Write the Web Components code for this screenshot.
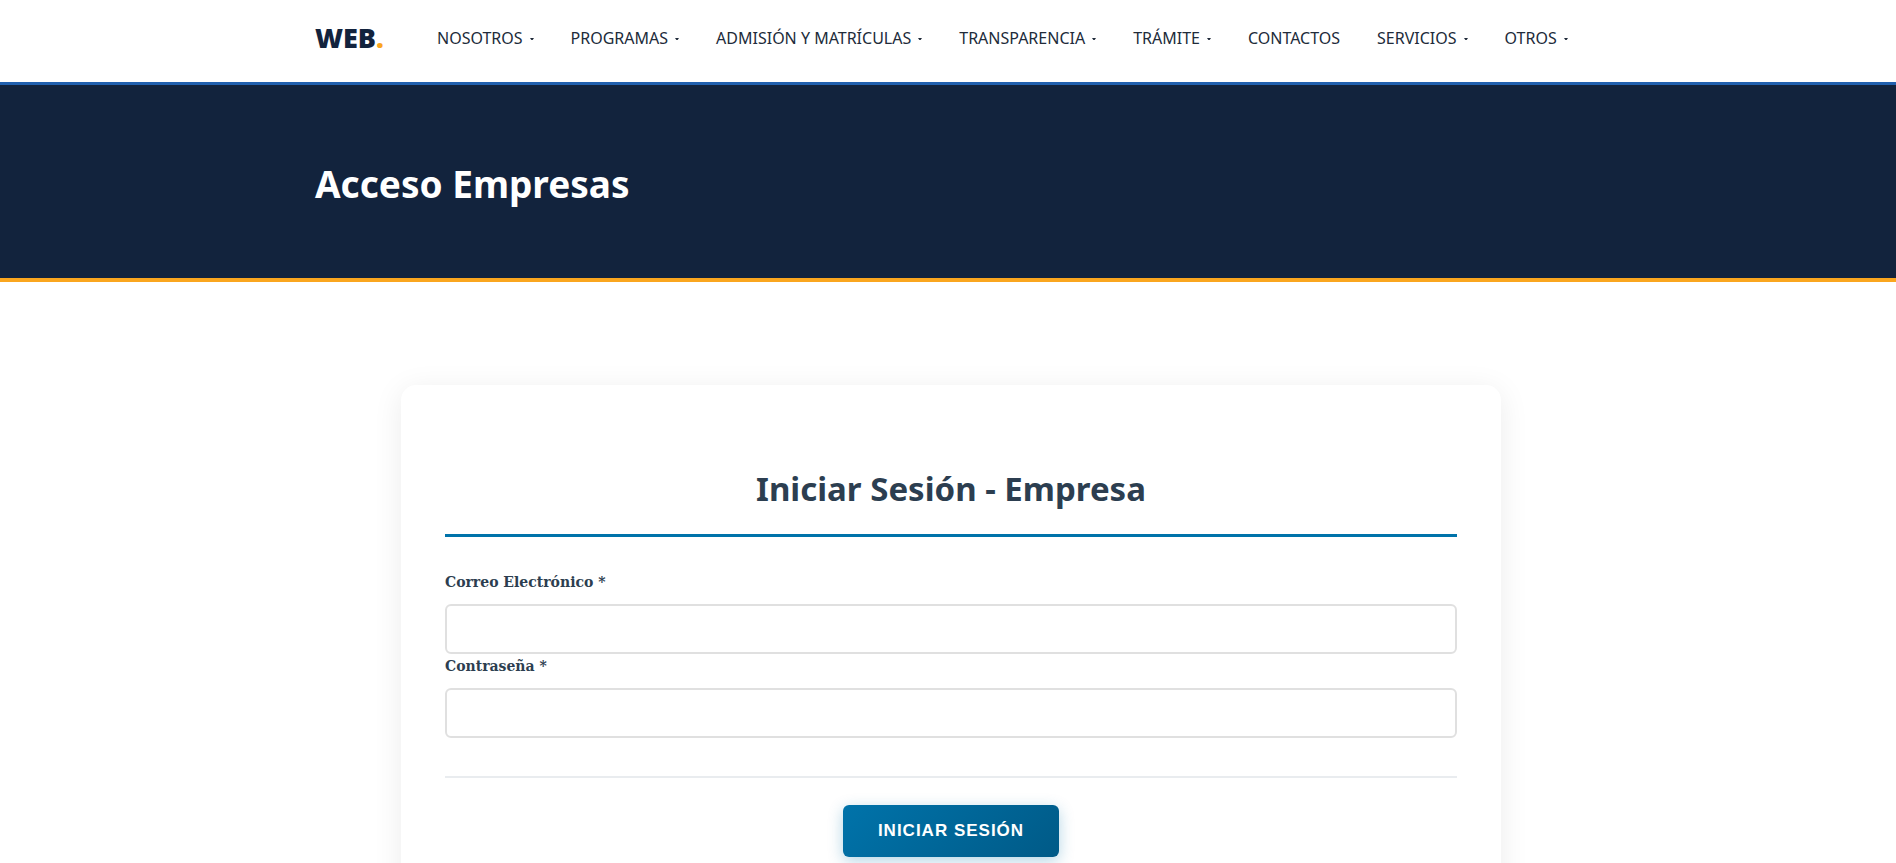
<!DOCTYPE html>
<html lang="es">
<head>
<meta charset="utf-8">
<meta name="viewport" content="width=device-width, initial-scale=1">
<title>Acceso Empresas</title>
<style>
  html, body { margin: 0; }
  body { font-family: "Noto Sans", "Open Sans", sans-serif; background: #fff; color: #2c3e50; overflow-x: hidden; }
</style>
</head>
<body>
<access-page></access-page>
<script>
const define = (name, html, setup) => customElements.define(name, class extends HTMLElement {
  constructor() {
    super();
    const t = document.createElement('template');
    t.innerHTML = html;
    this.attachShadow({ mode: 'open' }).append(t.content.cloneNode(true));
  }
  connectedCallback() { if (setup) setup(this, this.shadowRoot); }
});

define('nav-item', `
  <style>
    :host { display: block; }
    a { display: flex; align-items: center; gap: 7px; color: #212b3a; text-decoration: none; font-size: 16px; line-height: 20px; font-weight: 400; white-space: nowrap; }
    svg { display: none; margin-top: 2px; }
    :host([menu]) svg { display: block; }
  </style>
  <a href="#"><slot></slot><svg width="4" height="2" viewBox="0 0 4 2"><path d="M0 0h4L2.6 2H1.4z" fill="#212b3a"/></svg></a>`);

define('site-header', `
  <style>
    :host { display: block; border-bottom: 3px solid #2160ae; background: #fff; }
    .bar { display: flex; align-items: center; max-width: 1290px; height: 82px; margin: 0 auto; padding: 0 12px 6px; box-sizing: border-box; }
    .logo { color: #12233d; font: 800 27px/32px "Open Sans", sans-serif; text-decoration: none; width: 122px; flex: none; }
    .logo span { color: #faa61f; }
    nav { display: flex; gap: 37px; }
  </style>
  <div class="bar">
    <a class="logo" href="#">WEB<span>.</span></a>
    <nav aria-label="Principal">
      <nav-item menu>NOSOTROS</nav-item>
      <nav-item menu>PROGRAMAS</nav-item>
      <nav-item menu>ADMISIÓN Y MATRÍCULAS</nav-item>
      <nav-item menu>TRANSPARENCIA</nav-item>
      <nav-item menu>TRÁMITE</nav-item>
      <nav-item>CONTACTOS</nav-item>
      <nav-item menu>SERVICIOS</nav-item>
      <nav-item menu>OTROS</nav-item>
    </nav>
  </div>`);

define('page-hero', `
  <style>
    :host { display: block; background: #12233d; border-bottom: 4px solid #faa61f; }
    .in { max-width: 1290px; margin: 0 auto; padding: 75px 12px 70px; box-sizing: border-box; }
    h1 { margin: 0; color: #fff; font-size: 37px; line-height: 48px; font-weight: 700; }
  </style>
  <div class="in"><h1><slot></slot></h1></div>`);

define('form-field', `
  <style>
    :host { display: block; }
    label { display: block; font: 700 14px/24px "DejaVu Serif", serif; color: #2c3e50; margin-bottom: 10px; }
    input { display: block; width: 100%; height: 50px; box-sizing: border-box; border: 2px solid #e0e0e0; border-radius: 6px; padding: 12px 15px; font: 16px "Noto Sans", sans-serif; background: #fff; }
  </style>
  <label for="f"></label><input id="f">`, (host, root) => {
    root.querySelector('label').textContent = host.getAttribute('label');
    root.querySelector('input').type = host.getAttribute('type');
  });

define('login-card', `
  <style>
    :host { display: block; box-sizing: border-box; max-width: 1100px; margin: 0 auto; padding: 80px 44px 44px; border-radius: 15px; background: #fff; box-shadow: 0 5px 30px rgba(0,0,0,.08); }
    h2 { margin: 0 0 33px; padding-bottom: 21px; border-bottom: 3px solid #0073aa; text-align: center; font-size: 33px; line-height: 48px; font-weight: 700; color: #2c3e50; }
    .actions { margin-top: 38px; padding-top: 27px; border-top: 2px solid #e9ecef; display: flex; justify-content: center; }
    button { border: 0; border-radius: 6px; padding: 16px 35px; color: #fff; background: linear-gradient(135deg, #0073aa, #005a87); box-shadow: 0 4px 15px rgba(0,115,170,.3); font: 700 17px/20px "Liberation Sans", sans-serif; letter-spacing: 1px; }
  </style>
  <form>
    <h2>Iniciar Sesión - Empresa</h2>
    <form-field label="Correo Electrónico *" type="email"></form-field>
    <form-field label="Contraseña *" type="password"></form-field>
    <div class="actions"><button type="button">INICIAR SESIÓN</button></div>
  </form>`);

define('access-page', `
  <style>
    :host { display: block; }
    main { padding: 103px 0 60px 6px; }
  </style>
  <site-header></site-header>
  <page-hero>Acceso Empresas</page-hero>
  <main><login-card></login-card></main>`);
</script>
</body>
</html>
